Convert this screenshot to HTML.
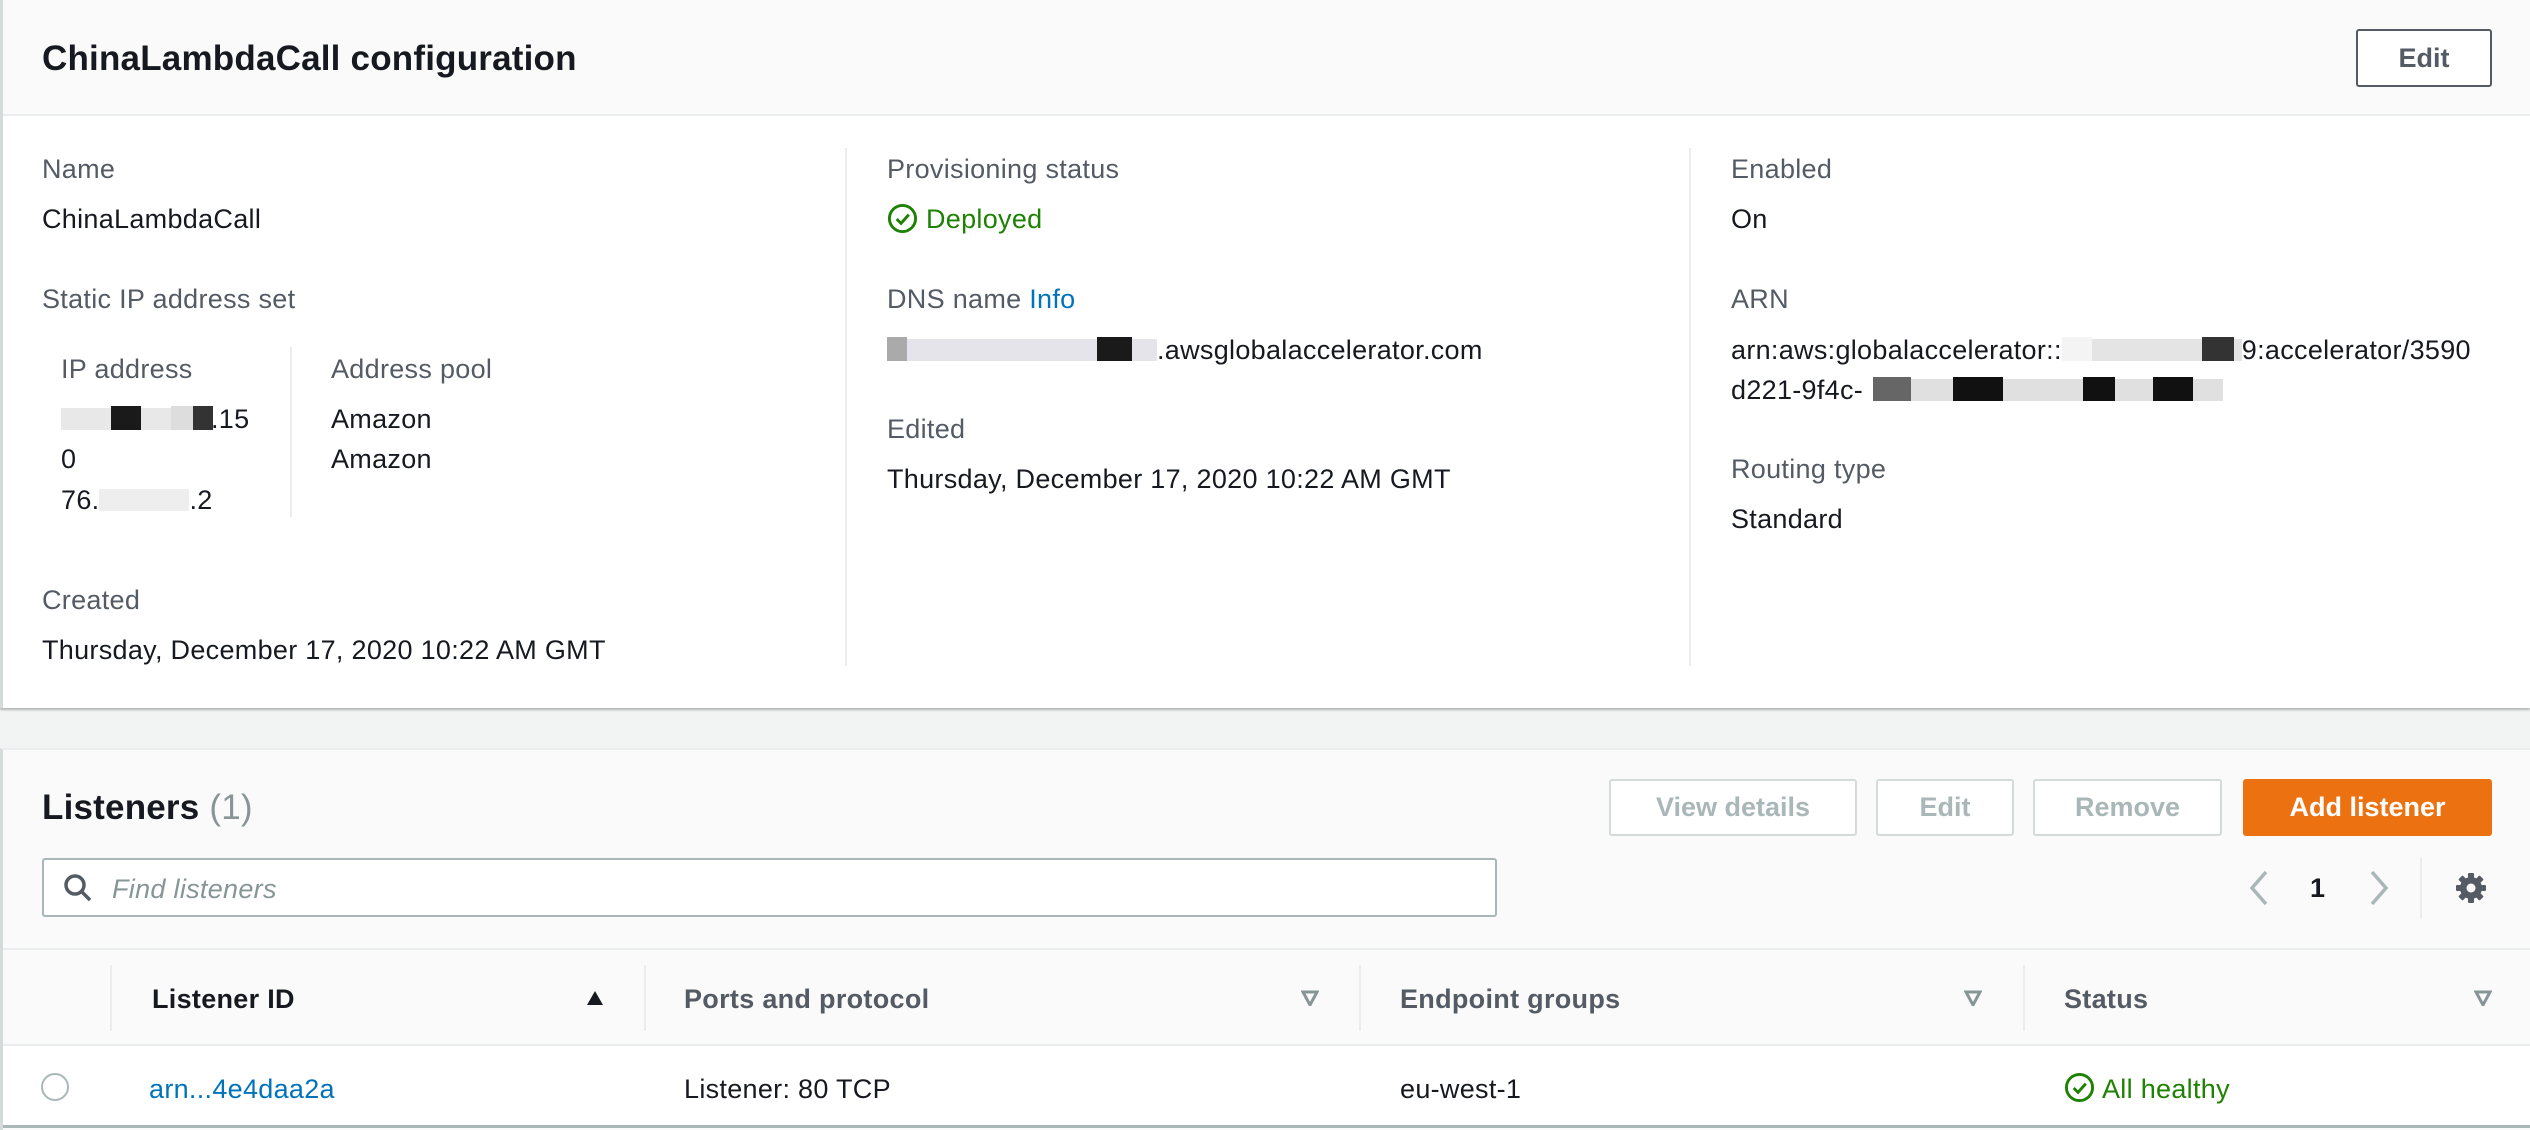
<!DOCTYPE html>
<html><head><meta charset="utf-8"><style>
*{margin:0;padding:0;box-sizing:border-box}
body{width:2530px;height:1130px;overflow:hidden;background:#f2f3f3;font-family:"Liberation Sans",sans-serif;color:#16191f;position:relative}
.a{position:absolute}
.t{position:absolute;line-height:40px;height:40px;white-space:nowrap;font-size:27px;letter-spacing:.3px;top:1px}
.l{color:#545b64}
.b{font-weight:bold}
.btn{position:absolute;border:2px solid #d5dbdb;background:#fff;border-radius:3px;font-weight:bold;font-size:27px;color:#aab7b8;display:flex;align-items:center;justify-content:center}
.z{display:inline-block;height:22px;vertical-align:-2px;position:relative}
.z i{position:absolute;top:-2px;height:24px}
</style></head><body>
<div class="a" style="left:0;top:0;width:2530px;height:708px;background:#fff;border-left:3px solid #d5dbdb;box-shadow:0 2px 2px rgba(0,0,0,.25)"></div>
<div class="a" style="left:3px;top:0;width:2527px;height:116px;background:#fafafa;border-bottom:2px solid #eaeded"></div>
<div class="t b" style="left:42px;top:39px;font-size:35px;letter-spacing:.2px">ChinaLambdaCall configuration</div>
<div class="btn" style="left:2356px;top:29px;width:136px;height:58px;border-color:#545b64;color:#545b64">Edit</div>

<div class="a" style="left:845px;top:148px;width:2px;height:518px;background:#eaeded"></div>
<div class="a" style="left:1689px;top:148px;width:2px;height:518px;background:#eaeded"></div>

<div class="t l" style="left:42px;top:149px">Name</div>
<div class="t" style="left:42px;top:199px">ChinaLambdaCall</div>
<div class="t l" style="left:42px;top:279px">Static IP address set</div>
<div class="t l" style="left:61px;top:349px">IP address</div>
<div class="a" style="left:290px;top:347px;width:2px;height:170px;background:#eaeded"></div>
<div class="t l" style="left:331px;top:349px">Address pool</div>
<div class="t" style="left:61px;top:399px"><span class="z" style="width:150px;background:#e8e8e8"><i style="left:50px;width:30px;background:#1a1a1a"></i><i style="left:110px;width:40px;background:#ddd"></i><i style="left:132px;width:20px;background:#333"></i></span>.15</div>
<div class="t" style="left:61px;top:439px">0</div>
<div class="t" style="left:61px;top:480px">76.<span class="z" style="width:90px;background:#eee"></span>.2</div>
<div class="t" style="left:331px;top:399px">Amazon</div>
<div class="t" style="left:331px;top:439px">Amazon</div>
<div class="t l" style="left:42px;top:580px">Created</div>
<div class="t" style="left:42px;top:630px">Thursday, December 17, 2020 10:22 AM GMT</div>

<div class="t l" style="left:887px;top:149px">Provisioning status</div>
<svg class="a" style="left:887px;top:203px" width="31" height="31" viewBox="0 0 32 32"><circle cx="16" cy="16" r="13.5" fill="none" stroke="#1d8102" stroke-width="3"/><path d="M10 16.5l4.5 4.5 8-9" fill="none" stroke="#1d8102" stroke-width="3"/></svg>
<div class="t" style="left:926px;top:199px;color:#1d8102">Deployed</div>
<div class="t l" style="left:887px;top:279px">DNS name <span style="color:#0073bb">Info</span></div>
<div class="t" style="left:887px;top:330px"><span class="z" style="width:270px;background:#e4e4ea"><i style="left:0;width:20px;background:#aaa"></i><i style="left:210px;width:35px;background:#1a1a1a"></i></span>.awsglobalaccelerator.com</div>
<div class="t l" style="left:887px;top:409px">Edited</div>
<div class="t" style="left:887px;top:459px">Thursday, December 17, 2020 10:22 AM GMT</div>

<div class="t l" style="left:1731px;top:149px">Enabled</div>
<div class="t" style="left:1731px;top:199px">On</div>
<div class="t l" style="left:1731px;top:279px">ARN</div>
<div class="t" style="left:1731px;top:330px">arn:aws:globalaccelerator::<span class="z" style="width:180px;background:#e4e4e4"><i style="left:0;width:30px;background:#f4f4f4"></i><i style="left:140px;width:32px;background:#333"></i></span>9:accelerator/3590</div>
<div class="t" style="left:1731px;top:370px">d221-9f4c-<span class="z" style="width:350px;margin-left:10px;background:#e0e0e0"><i style="left:0;width:38px;background:#666"></i><i style="left:80px;width:50px;background:#111"></i><i style="left:210px;width:32px;background:#111"></i><i style="left:280px;width:40px;background:#111"></i></span></div>
<div class="t l" style="left:1731px;top:449px">Routing type</div>
<div class="t" style="left:1731px;top:499px">Standard</div>

<div class="a" style="left:0;top:748px;width:2530px;height:382px;background:#fafafa;border-left:3px solid #d5dbdb;border-top:2px solid #eaeded"></div>
<div class="t b" style="left:42px;top:788px;font-size:35px;letter-spacing:.2px">Listeners <span style="color:#879596;font-weight:normal">(1)</span></div>
<div class="btn" style="left:1609px;top:779px;width:248px;height:57px">View details</div>
<div class="btn" style="left:1876px;top:779px;width:138px;height:57px">Edit</div>
<div class="btn" style="left:2033px;top:779px;width:189px;height:57px">Remove</div>
<div class="btn" style="left:2243px;top:779px;width:249px;height:57px;background:#ec7211;border-color:#ec7211;color:#fff">Add listener</div>

<div class="a" style="left:42px;top:858px;width:1455px;height:59px;background:#fff;border:2px solid #aab7b8;border-radius:3px"></div>
<svg class="a" style="left:62px;top:872px" width="32" height="32" viewBox="0 0 32 32"><circle cx="13" cy="13" r="9" fill="none" stroke="#545b64" stroke-width="3.5"/><path d="M20 20l8 8" stroke="#545b64" stroke-width="3.5"/></svg>
<div class="t" style="left:112px;top:869px;color:#879596;font-style:italic">Find listeners</div>

<svg class="a" style="left:2248px;top:870px" width="24" height="36" viewBox="0 0 24 36"><path d="M18 2L4 18l14 16" fill="none" stroke="#aab7b8" stroke-width="3.5"/></svg>
<div class="t b" style="left:2310px;top:868px;font-size:27px">1</div>
<svg class="a" style="left:2366px;top:870px" width="24" height="36" viewBox="0 0 24 36"><path d="M6 2l14 16L6 34" fill="none" stroke="#aab7b8" stroke-width="3.5"/></svg>
<div class="a" style="left:2420px;top:858px;width:2px;height:60px;background:#eaeded"></div>
<svg class="a" style="left:2455px;top:872px" width="32" height="32" viewBox="0 0 32 32"><g fill="#545b64"><rect x="13" y="1" width="6" height="30" rx="1"/><rect x="13" y="1" width="6" height="30" rx="1" transform="rotate(45 16 16)"/><rect x="13" y="1" width="6" height="30" rx="1" transform="rotate(90 16 16)"/><rect x="13" y="1" width="6" height="30" rx="1" transform="rotate(135 16 16)"/><circle cx="16" cy="16" r="11"/></g><circle cx="16" cy="16" r="4.5" fill="#fafafa"/></svg>

<div class="a" style="left:3px;top:948px;width:2527px;height:2px;background:#eaeded"></div>
<div class="a" style="left:110px;top:965px;width:2px;height:66px;background:#eaeded"></div>
<div class="a" style="left:644px;top:965px;width:2px;height:66px;background:#eaeded"></div>
<div class="a" style="left:1359px;top:965px;width:2px;height:66px;background:#eaeded"></div>
<div class="a" style="left:2023px;top:965px;width:2px;height:66px;background:#eaeded"></div>
<div class="t b" style="left:152px;top:979px;color:#16191f">Listener ID</div>
<div class="t b l" style="left:684px;top:979px">Ports and protocol</div>
<div class="t b l" style="left:1400px;top:979px">Endpoint groups</div>
<div class="t b l" style="left:2064px;top:979px">Status</div>
<svg class="a" style="left:586px;top:990px" width="18" height="16"><path d="M9 1L17 15H1z" fill="#16191f"/></svg>
<svg class="a" style="left:1301px;top:990px" width="18" height="16"><path d="M2 2h14L9 15z" fill="none" stroke="#879596" stroke-width="3"/></svg>
<svg class="a" style="left:1964px;top:990px" width="18" height="16"><path d="M2 2h14L9 15z" fill="none" stroke="#879596" stroke-width="3"/></svg>
<svg class="a" style="left:2474px;top:990px" width="18" height="16"><path d="M2 2h14L9 15z" fill="none" stroke="#879596" stroke-width="3"/></svg>

<div class="a" style="left:3px;top:1044px;width:2527px;height:84px;background:#fff;border-top:2px solid #eaeded;border-bottom:3px solid #aab7b8"></div>
<div class="a" style="left:41px;top:1073px;width:28px;height:28px;border:2px solid #aab7b8;border-radius:50%;background:#fff"></div>
<div class="t" style="left:149px;top:1069px;color:#0073bb">arn...4e4daa2a</div>
<div class="t" style="left:684px;top:1069px">Listener: 80 TCP</div>
<div class="t" style="left:1400px;top:1069px">eu-west-1</div>
<svg class="a" style="left:2064px;top:1072px" width="31" height="31" viewBox="0 0 32 32"><circle cx="16" cy="16" r="13.5" fill="none" stroke="#1d8102" stroke-width="3"/><path d="M10 16.5l4.5 4.5 8-9" fill="none" stroke="#1d8102" stroke-width="3"/></svg>
<div class="t" style="left:2102px;top:1069px;color:#1d8102">All healthy</div>
</body></html>
